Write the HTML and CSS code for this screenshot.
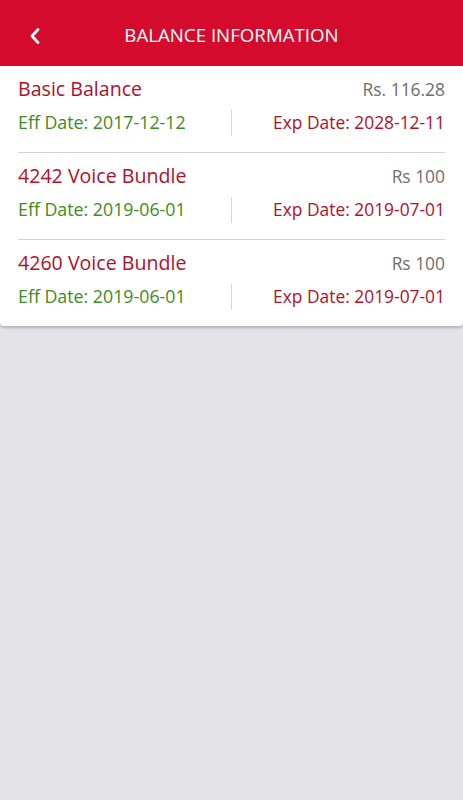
FILE: index.html
```html
<!DOCTYPE html>
<html>
<head>
<meta charset="utf-8">
<link rel="stylesheet" href="styles.css">
</head>
<body>
<header class="topbar">
  <svg class="back" width="14" height="20" viewBox="0 0 14 20"><path d="M10 3.5 L4 10 L10 16.5" fill="none" stroke="#fff" stroke-width="2.8" stroke-linecap="round" stroke-linejoin="round"/></svg>
  <h1 class="title">BALANCE INFORMATION</h1>
</header>
<main class="card">
  <section class="item">
    <div class="row">
      <span class="name">Basic Balance</span>
      <span class="amount">Rs. 116.28</span>
    </div>
    <div class="row dates">
      <span class="eff">Eff Date: 2017-12-12</span>
      <span class="divider"></span>
      <span class="exp">Exp Date: 2028-12-11</span>
    </div>
  </section>
  <section class="item">
    <div class="row">
      <span class="name">4242 Voice Bundle</span>
      <span class="amount">Rs 100</span>
    </div>
    <div class="row dates">
      <span class="eff">Eff Date: 2019-06-01</span>
      <span class="divider"></span>
      <span class="exp">Exp Date: 2019-07-01</span>
    </div>
  </section>
  <section class="item">
    <div class="row">
      <span class="name">4260 Voice Bundle</span>
      <span class="amount">Rs 100</span>
    </div>
    <div class="row dates">
      <span class="eff">Eff Date: 2019-06-01</span>
      <span class="divider"></span>
      <span class="exp">Exp Date: 2019-07-01</span>
    </div>
  </section>
</main>
</body>
</html>
```

FILE: styles.css
```css
* { box-sizing: border-box; }
html, body { margin: 0; padding: 0; }
body {
  background: #e4e3e8;
  font-family: "Open Sans", "Liberation Sans", sans-serif;
  width: 463px;
  height: 800px;
  overflow: hidden;
}
.topbar {
  height: 66px;
  background: #d40b2d;
  display: flex;
  align-items: center;
  position: relative;
}
.back {
  position: absolute;
  left: 28px;
  top: 26px;
}
.title {
  margin: 0;
  flex: 1;
  text-align: center;
  color: #fff;
  font-weight: 400;
  font-size: 18.7px;
  padding-top: 2px;
}
.card {
  background: #fff;
  box-shadow: 0 2px 3px rgba(0,0,0,0.22);
  border-radius: 0 0 4px 4px;
  padding: 0 18px;
}
.item {
  height: 87px;
  padding-top: 10px;
  border-bottom: 1px solid #d4d4d4;
}
.item:last-child { border-bottom: none; height: 86px; }
.row {
  display: flex;
  justify-content: space-between;
  align-items: center;
}
.name {
  color: #b0102a;
  font-size: 19.6px;
  line-height: 26px;
}
.amount {
  color: #6e6e6e;
  font-size: 17.4px;
  line-height: 26px;
}
.dates {
  margin-top: 7px;
  height: 26px;
}
.eff {
  color: #3e8c1c;
  font-size: 17.8px;
  flex: 1;
}
.exp {
  color: #b0102a;
  font-size: 17.4px;
  flex: 1;
  text-align: right;
}
.divider {
  width: 1px;
  height: 26px;
  margin-top: 2px;
  background: #d6d6d6;
}
```
